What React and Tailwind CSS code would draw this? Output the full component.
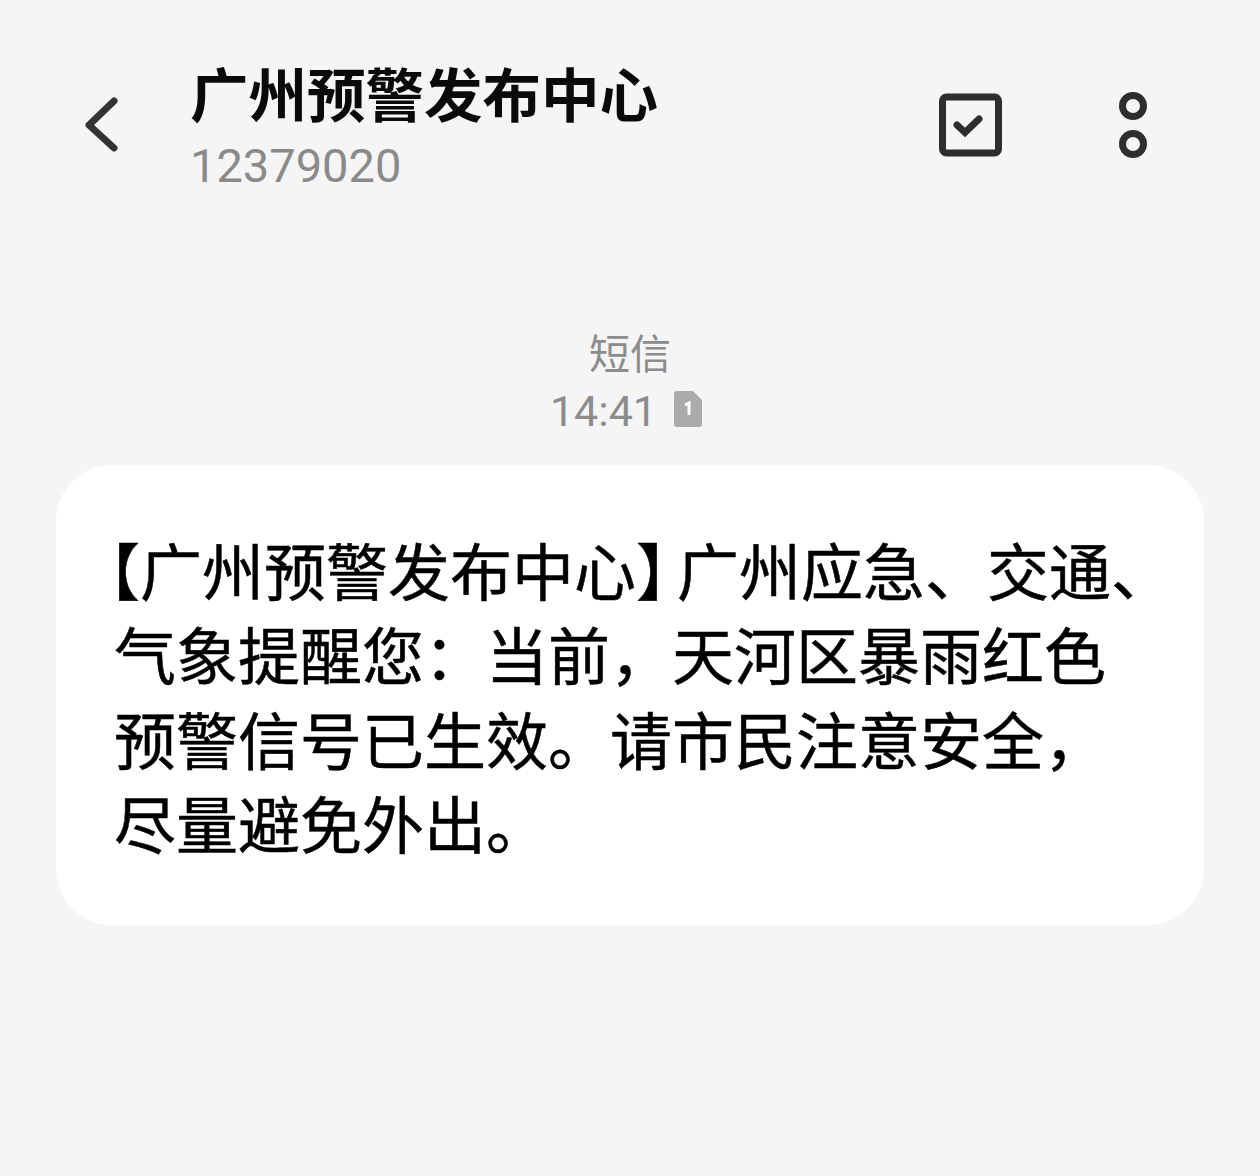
export default function App() {
  const cjk = { fontFamily: '"Noto Sans CJK SC", sans-serif' };
  return (
    <div className="w-[1260px] h-[1176px] overflow-hidden bg-[#f5f5f5] flex flex-col" style={cjk}>
      <header className="h-[216px] flex items-start pt-[57px] pl-[80px] pr-[111px]">
        <svg width="44" height="60" viewBox="0 0 44 60" className="mt-[38px] shrink-0" fill="none" stroke="#333" strokeWidth="7" strokeLinecap="round" strokeLinejoin="round">
          <path d="M34 11 L9 35 L34 58" transform="translate(0,-5)" />
        </svg>
        <div className="ml-[66px] flex flex-col">
          <div className="text-[58.5px] leading-[70px] font-bold text-[#0a0a0a] whitespace-nowrap">广州预警发布中心</div>
          <div className="mt-[11px] text-[47px] leading-[56px] text-[#8a8a8a] font-['Roboto']">12379020</div>
        </div>
        <div className="ml-auto flex items-center gap-[114px] mt-[33px]">
          <svg width="66" height="66" viewBox="0 0 66 66" fill="none" stroke="#2e2e2e" strokeLinejoin="round" strokeLinecap="round">
            <rect x="5.5" y="5" width="56" height="56" rx="4" strokeWidth="7" />
            <path d="M20 33 L28 40.5 L42 27" strokeWidth="7" strokeLinejoin="miter" />
          </svg>
          <svg width="32" height="70" viewBox="0 0 32 70" fill="none" stroke="#2e2e2e" strokeWidth="7">
            <circle cx="16" cy="16" r="10.5" />
            <circle cx="16" cy="54" r="10.5" />
          </svg>
        </div>
      </header>
      <div className="flex flex-col items-center text-[#8c8c8c] mt-[110px]">
        <div className="text-[41px] leading-[50px]">短信</div>
        <div className="flex items-center gap-[17px] h-[56px] mt-[7px] -ml-[8px]">
          <span className="text-[43px] leading-[56px] font-['Roboto']">14:41</span>
          <svg width="28" height="36" viewBox="0 0 28 36" className="-mt-[4px]">
            <path d="M3 0 H19 L28 9 V33 a3 3 0 0 1 -3 3 H3 a3 3 0 0 1 -3 -3 V3 a3 3 0 0 1 3 -3 Z" fill="#ababab" />
            <path d="M11 14 L15 12 V24" fill="none" stroke="#fff" strokeWidth="3" />
          </svg>
        </div>
      </div>
      <div className="mx-[56px] mt-[26px] h-[460px] rounded-[56px] bg-white pl-[58px] pt-[62px] text-[62px] leading-[84.3px] [-webkit-text-stroke:0.5px_#000] text-black whitespace-nowrap">
        <div><span className="-ml-[5px] [font-feature-settings:'halt']">【</span>广州预警发布中心<span className="mr-[10px] [font-feature-settings:'halt']">】</span>广州应急、交通、</div>
        <div>气象提醒您：当前，天河区暴雨红色</div>
        <div>预警信号已生效。请市民注意安全，</div>
        <div>尽量避免外出。</div>
      </div>
    </div>
  );
}
